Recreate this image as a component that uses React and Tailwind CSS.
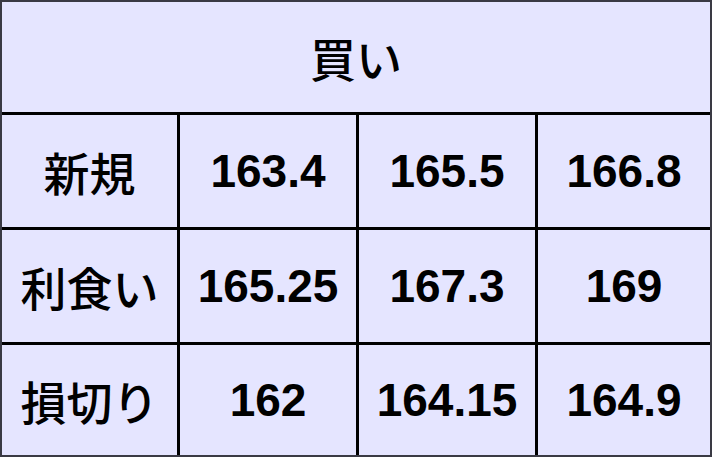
import React from "react";

const rows = [
  ["新規", "163.4", "165.5", "166.8"],
  ["利食い", "165.25", "167.3", "169"],
  ["損切り", "162", "164.15", "164.9"],
];

export default function App() {
  return (
    <div className="w-[712px] h-[457px] border-2 border-[#3a3a44] bg-black">
      <div className="grid h-full w-full grid-cols-[175px_176px_176px_1fr] grid-rows-[110px_112px_112px_1fr] gap-[3px]">
        <div
          className="col-span-4 flex items-center justify-center bg-[#e5e5ff] text-[46px] font-medium text-black"
          style={{ fontFamily: '"Noto Sans CJK JP", sans-serif' }}
        >
          <span className="leading-none">買い</span>
        </div>
        {rows.map((r, i) => (
          <React.Fragment key={i}>
            <div
              className="flex items-center justify-center bg-[#e5e5ff] text-[46px] font-medium text-black"
              style={{ fontFamily: '"Noto Sans CJK JP", sans-serif' }}
            >
              <span className="leading-none">{r[0]}</span>
            </div>
            {r.slice(1).map((v, j) => (
              <div
                key={j}
                className="flex items-center justify-center bg-[#e5e5ff] text-[46px] font-bold text-black"
                style={{ fontFamily: '"Liberation Sans", Arial, sans-serif' }}
              >
                <span className="leading-none">{v}</span>
              </div>
            ))}
          </React.Fragment>
        ))}
      </div>
    </div>
  );
}
